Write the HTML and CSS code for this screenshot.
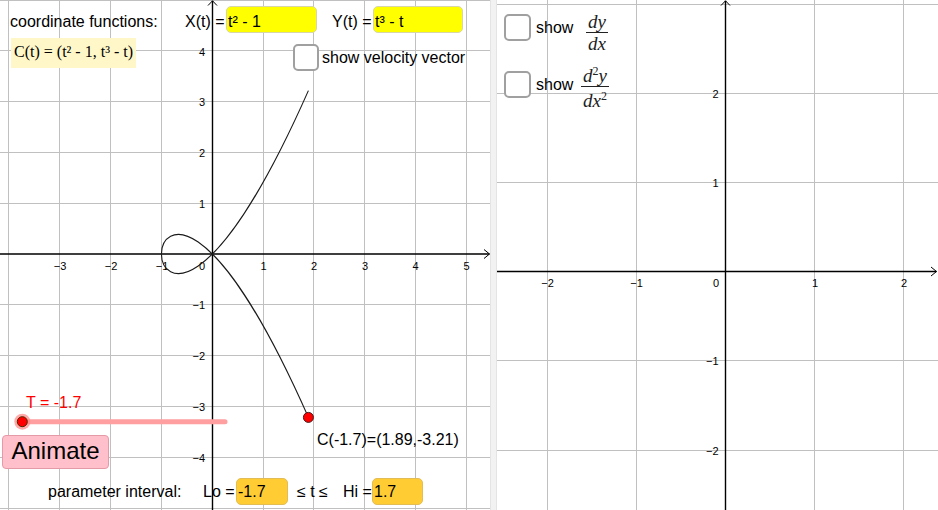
FILE: index.html
```html
<!DOCTYPE html>
<html lang="en">
<head>
<meta charset="utf-8">
<title>Parametric curve C(t)</title>
<link rel="stylesheet" href="styles.css">
</head>
<body>
<div class="app">
  <section class="panel panel-left">
    <svg class="graph" width="490" height="510" viewBox="0 0 490 510">
      <path class="grid" d="M8.5 0V510M59.5 0V510M110.5 0V510M161.5 0V510M263.5 0V510M313.5 0V510M364.5 0V510M415.5 0V510M466.5 0V510M0 0.5H490M0 50.5H490M0 101.5H490M0 152.5H490M0 203.5H490M0 304.5H490M0 355.5H490M0 406.5H490M0 457.5H490M0 508.5H490"/>
      <path class="axis" d="M0 254H489.5M212.5 510V0.8"/>
      <path class="arrow" d="M484 249.5L489.5 254L484 258.5M208 5.5L212.5 0.8L217 5.5"/>
      <g class="tick tick-mid">
        <text x="60" y="270">−3</text>
        <text x="111" y="270">−2</text>
        <text x="162" y="270">−1</text>
        <text x="263.5" y="270">1</text>
        <text x="314" y="270">2</text>
        <text x="365" y="270">3</text>
        <text x="415.5" y="270">4</text>
        <text x="466.5" y="270">5</text>
      </g>
      <g class="tick tick-end">
        <text x="205" y="270">0</text>
        <text x="205" y="55.5">4</text>
        <text x="205" y="106">3</text>
        <text x="205" y="157">2</text>
        <text x="205" y="208">1</text>
        <text x="205" y="309">−1</text>
        <text x="205" y="360">−2</text>
        <text x="205" y="411">−3</text>
        <text x="205" y="462">−4</text>
      </g>
      <path class="curve" d="M308.4 417.4C112.46 -24.64 112.46 532.64 308.4 90.62"/>
      <line class="slider-track" x1="22" y1="421.7" x2="225" y2="421.7"/>
      <circle class="slider-halo" cx="22.3" cy="421.7" r="8"/>
      <circle class="slider-knob" cx="22.3" cy="421.7" r="5"/>
      <circle class="point" cx="308.4" cy="417.4" r="5"/>
    </svg>

    <div class="txt coord-label">coordinate functions:</div>
    <div class="txt xt-label">X(t) =</div>
    <div class="field field-yellow xt-field">t² - 1</div>
    <div class="txt yt-label">Y(t) =</div>
    <div class="field field-yellow yt-field">t³ - t</div>
    <div class="ct-box">C(t) = (t² - 1, t³ - t)</div>

    <div class="checkbox vel-check"></div>
    <div class="txt vel-label">show velocity vector</div>

    <div class="txt t-label">T = -1.7</div>
    <div class="animate-btn">Animate</div>
    <div class="txt c-label">C(-1.7)=(1.89,-3.21)</div>

    <div class="txt param-label">parameter interval:</div>
    <div class="txt lo-label">Lo =</div>
    <div class="field field-orange lo-field">-1.7</div>
    <div class="txt le-label">≤ t ≤</div>
    <div class="txt hi-label">Hi =</div>
    <div class="field field-orange hi-field">1.7</div>
  </section>

  <div class="divider"></div>

  <section class="panel panel-right">
    <svg class="graph" width="441" height="510" viewBox="0 0 441 510">
      <path class="grid" d="M50.5 0V510M139.5 0V510M317.5 0V510M406.5 0V510M0 4.5H441M0 93.5H441M0 182.5H441M0 360.5H441M0 450.5H441"/>
      <path class="axis" d="M0 271.5H439.5M228.5 510V0.8"/>
      <path class="arrow" d="M434 267L439.5 271.5L434 276M224 5.5L228.5 0.8L233 5.5"/>
      <g class="tick tick-mid">
        <text x="50.5" y="287">−2</text>
        <text x="139.5" y="287">−1</text>
        <text x="318" y="287">1</text>
        <text x="407" y="287">2</text>
      </g>
      <g class="tick tick-end">
        <text x="222" y="287">0</text>
        <text x="221.5" y="98">2</text>
        <text x="221.5" y="187">1</text>
        <text x="221.5" y="365">−1</text>
        <text x="221.5" y="455">−2</text>
      </g>
    </svg>

    <div class="checkbox dy-check"></div>
    <div class="txt dy-label">show</div>
    <div class="frac frac-dy">
      <span class="num">dy</span>
      <span class="bar"></span>
      <span class="den">dx</span>
    </div>

    <div class="checkbox d2y-check"></div>
    <div class="txt d2y-label">show</div>
    <div class="frac frac-d2y">
      <span class="num">d<sup>2</sup>y</span>
      <span class="bar"></span>
      <span class="den">dx<sup>2</sup></span>
    </div>
  </section>
</div>
</body>
</html>
```

FILE: styles.css
```css
* {
  box-sizing: border-box;
}

html,
body {
  margin: 0;
  padding: 0;
}

body {
  width: 938px;
  height: 510px;
  overflow: hidden;
  background: #ffffff;
  font-family: "Liberation Sans", Arial, sans-serif;
  color: #000000;
}

.app {
  display: flex;
  width: 938px;
  height: 510px;
}

.panel {
  position: relative;
  height: 510px;
  overflow: hidden;
  background: #ffffff;
}

.panel-left {
  flex: none;
  width: 490px;
}

.divider {
  flex: none;
  width: 7px;
  height: 510px;
  background: #f2f2f2;
  border-left: 1px solid #e4e4e4;
  border-right: 1px solid #e4e4e4;
}

.panel-right {
  flex: 1;
}

.graph {
  display: block;
}

/* ---------- graph drawing ---------- */
.grid {
  fill: none;
  stroke: #c0c0c0;
  stroke-width: 1;
}

.axis {
  fill: none;
  stroke: #000000;
  stroke-width: 1.4;
}

.arrow {
  fill: none;
  stroke: #000000;
  stroke-width: 1;
}

.tick {
  font-family: "Liberation Sans", Arial, sans-serif;
  font-size: 11px;
  fill: #000000;
}

.tick-mid {
  text-anchor: middle;
}

.tick-end {
  text-anchor: end;
}

.curve {
  fill: none;
  stroke: #1a1a1a;
  stroke-width: 1.1;
}

.slider-track {
  stroke: #ff9f9f;
  stroke-width: 5;
  stroke-linecap: round;
}

.slider-halo {
  fill: #ff8c8c;
  fill-opacity: 0.75;
}

.slider-knob {
  fill: #ff0000;
  stroke: #4a2a00;
  stroke-width: 1;
}

.point {
  fill: #ff0000;
  stroke: #4a1a1a;
  stroke-width: 1;
}

/* ---------- widgets placed on the canvas ---------- */
.txt {
  position: absolute;
  font-size: 16px;
  line-height: 18px;
  white-space: nowrap;
}

.field {
  position: absolute;
  height: 27px;
  padding: 6px 1px 0;
  font-size: 16px;
  line-height: 18px;
  white-space: nowrap;
  border-radius: 5px;
}

.field-yellow {
  background: #ffff00;
  border: 1px solid #d6d6a8;
}

.field-orange {
  background: #ffcc33;
  border: 1px solid #e2bd55;
  padding-top: 4px;
}

.checkbox {
  position: absolute;
  width: 27px;
  height: 27px;
  background: #ffffff;
  border: 2px solid #a0a0a0;
  border-radius: 5px;
}

.coord-label {
  left: 10px;
  top: 13px;
}

.xt-label {
  left: 185px;
  top: 13px;
}

.xt-field {
  left: 226px;
  top: 6px;
  width: 91px;
}

.yt-label {
  left: 332px;
  top: 13px;
}

.yt-field {
  left: 373px;
  top: 6px;
  width: 90px;
}

.ct-box {
  position: absolute;
  left: 11px;
  top: 38px;
  width: 125px;
  height: 30px;
  padding: 5px 0 0 3px;
  background: #fff7c8;
  font-family: "Liberation Serif", "Times New Roman", serif;
  font-size: 16px;
  line-height: 18px;
  white-space: nowrap;
}

.vel-check {
  left: 293px;
  top: 44px;
  width: 26px;
}

.vel-label {
  left: 322px;
  top: 49px;
}

.t-label {
  left: 26px;
  top: 394px;
  color: #ff0000;
}

.animate-btn {
  position: absolute;
  left: 2px;
  top: 435px;
  width: 107px;
  height: 34px;
  padding-bottom: 2px;
  background: #ffc0cb;
  border: 1px solid #e59aa7;
  border-radius: 4px;
  font-size: 24px;
  line-height: 30px;
  text-align: center;
}

.c-label {
  left: 317px;
  top: 431px;
}

.param-label {
  left: 48px;
  top: 483px;
}

.lo-label {
  left: 203px;
  top: 483px;
}

.lo-field {
  left: 236px;
  top: 478px;
  width: 52px;
}

.le-label {
  left: 297px;
  top: 483px;
}

.hi-label {
  left: 343px;
  top: 483px;
}

.hi-field {
  left: 372px;
  top: 478px;
  width: 51px;
}

/* ---------- right panel ---------- */
.dy-check {
  left: 7px;
  top: 14px;
}

.dy-label {
  left: 39px;
  top: 19px;
}

.d2y-check {
  left: 7px;
  top: 71px;
}

.d2y-label {
  left: 39px;
  top: 76px;
}

.frac {
  position: absolute;
  display: flex;
  flex-direction: column;
  align-items: center;
  font-family: "Liberation Serif", "Times New Roman", serif;
  font-style: italic;
  font-size: 19px;
  color: #222222;
}

.frac .num,
.frac .den {
  display: block;
  height: 15px;
  line-height: 15px;
  padding: 0 2px;
  white-space: nowrap;
}

.frac .bar {
  display: block;
  width: 100%;
  height: 1px;
  margin: 3px 0;
  background: #222222;
}

.frac sup {
  font-size: 12px;
  line-height: 0;
  vertical-align: 7px;
  font-style: normal;
}

.frac-dy {
  left: 89px;
  top: 14px;
}

.frac-d2y {
  left: 84px;
  top: 68px;
}

.frac-d2y .den {
  margin-top: 3px;
}
```
